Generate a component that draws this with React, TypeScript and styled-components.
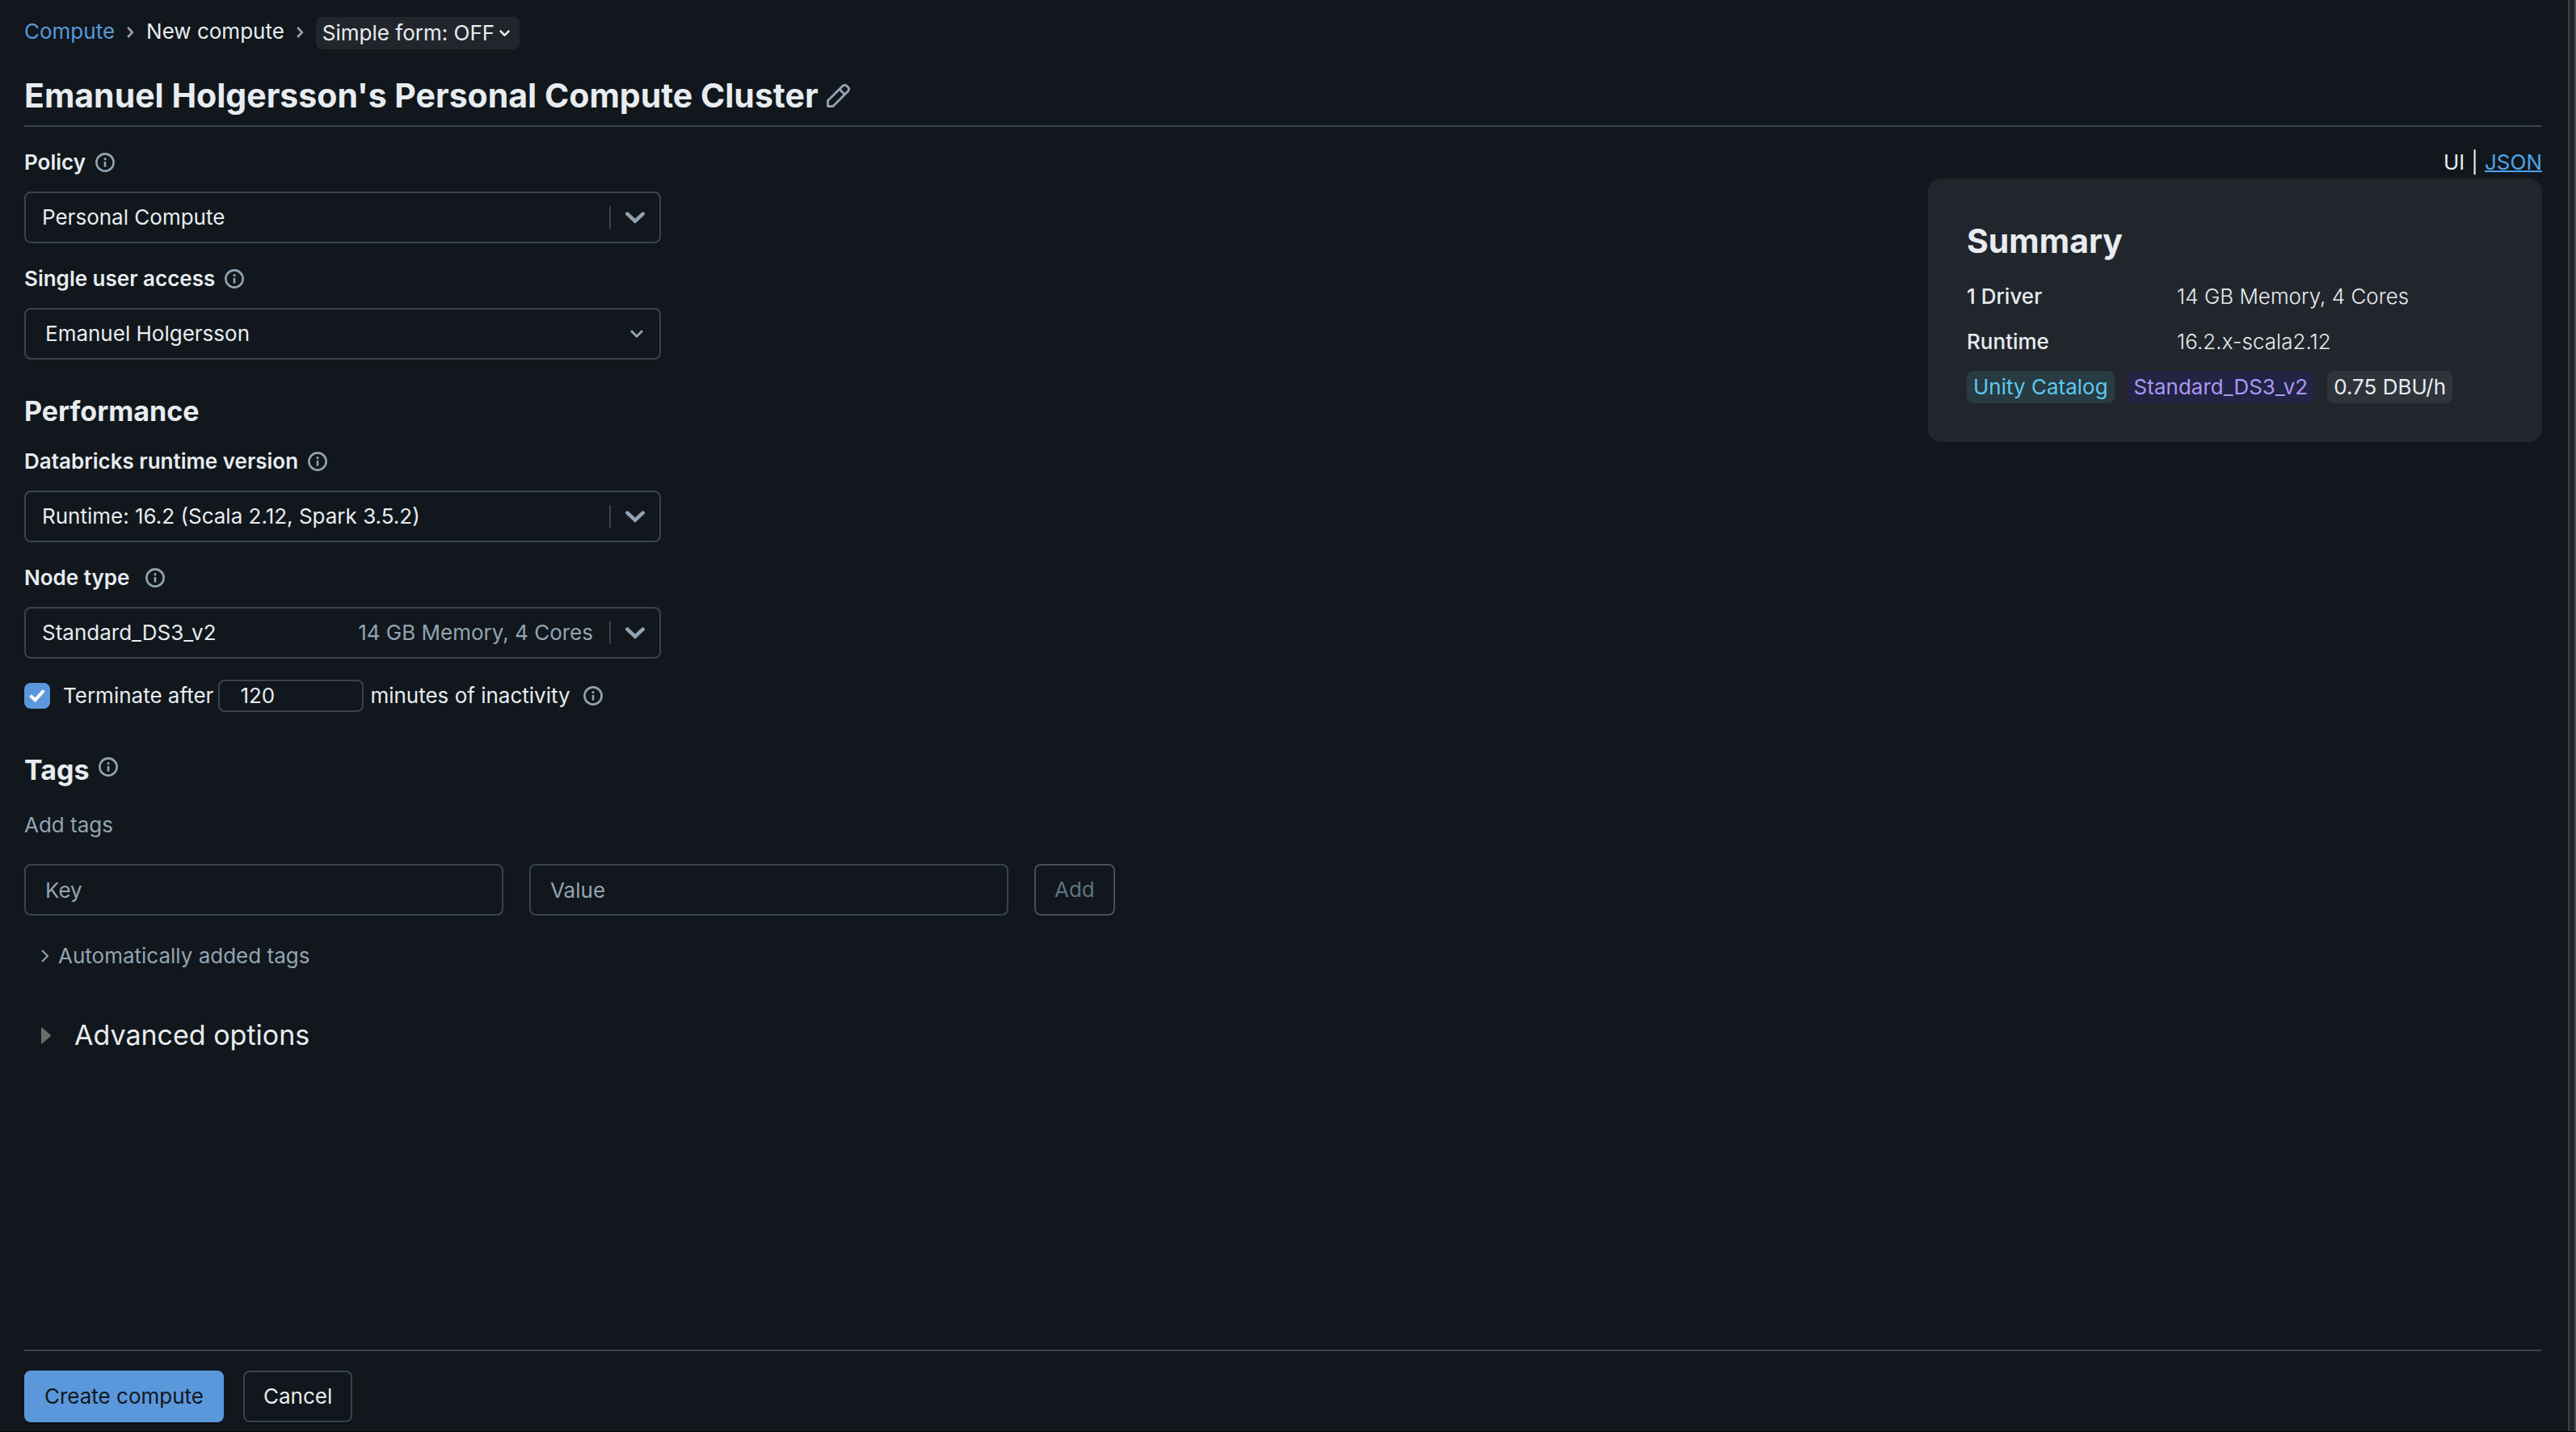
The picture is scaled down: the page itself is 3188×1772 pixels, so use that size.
import React, { useId, useState } from "react";
import styled, { createGlobalStyle, css } from "styled-components";

const color = {
  bg: "#11171c",
  panel: "#22262c",
  text: "#e8ecf0",
  muted: "#92a4b3",
  faint: "#5f7281",
  border: "#37444f",
  link: "#5a97db",
  linkBright: "#4ea3ea",
  primary: "#5a97db",
};

const GlobalStyle = createGlobalStyle`
  *, *::before, *::after { box-sizing: border-box; }
  body {
    margin: 0;
    background: ${color.bg};
    color: ${color.text};
    font-family: Inter, "Noto Sans", sans-serif;
    font-size: 26px;
    line-height: 40px;
  }
  button, input, select { font: inherit; color: inherit; }
`;

const Shell = styled.div`
  display: flex;
  min-height: 100vh;
  border-bottom: 1px solid #050507;
`;

const Page = styled.div`
  flex: 1;
  min-width: 0;
  display: flex;
  flex-direction: column;
  padding: 21px 32px 11px 30px;
`;

const Rail = styled.div`
  width: 10px;
  background: #22272b;
  border-left: 2px solid ${color.border};
  border-right: 2px solid #4a4e50;
`;

const Breadcrumbs = styled.nav`
  display: flex;
  align-items: flex-start;
  line-height: 36px;
`;

const Crumb = styled.a`
  color: ${color.link};
  text-decoration: none;
`;

const CrumbArrow = styled.svg`
  width: 9px;
  height: 36px;
  margin: 0 15px;
  fill: none;
  stroke: ${color.muted};
  stroke-width: 2.6;
`;

const ModeButton = styled.button`
  display: flex;
  align-items: center;
  gap: 6px;
  height: 40px;
  padding: 0 12px 0 8px;
  border: 0;
  border-radius: 8px;
  background: ${color.panel};
`;

const TitleRow = styled.header`
  display: flex;
  align-items: center;
  gap: 10px;
  margin-top: 28px;
  padding-bottom: 8px;
  border-bottom: 2px solid ${color.border};
`;

const Title = styled.h1`
  margin: 0;
  font-size: 41px;
  font-weight: 700;
  line-height: 58px;
`;

const IconButton = styled.button`
  display: inline-flex;
  align-items: center;
  height: 40px;
  padding: 0;
  border: 0;
  background: none;
  color: ${color.muted};
`;

const Main = styled.main`
  flex: 1;
  display: grid;
  grid-template-columns: minmax(0, 1fr) 760px;
  align-items: start;
  padding-top: 24px;
`;

const Form = styled.form`
  display: flex;
  flex-direction: column;
  align-items: flex-start;
`;

const Field = styled.div`
  width: 788px;
  max-width: 100%;
  & + & { margin-top: 24px; }
`;

const LabelRow = styled.div<{ $gap?: number }>`
  display: flex;
  align-items: flex-start;
  gap: ${(p) => p.$gap ?? 12}px;
  margin-bottom: 16px;
  font-weight: 600;
`;

const box = css`
  height: 64px;
  border: 2px solid ${color.border};
  border-radius: 8px;
  background: transparent;
`;

const SelectBox = styled.div<{ $inset: number; $end: number }>`
  ${box}
  display: flex;
  align-items: center;
  padding: 0 ${(p) => p.$end}px 0 ${(p) => p.$inset}px;
`;

const Select = styled.select`
  flex: 1;
  min-width: 0;
  height: 60px;
  padding: 0;
  border: 0;
  outline: 0;
  appearance: none;
  background: transparent;
`;

const Hint = styled.span`
  margin-right: 20px;
  color: ${color.muted};
`;

const Separator = styled.span`
  width: 2px;
  height: 28px;
  margin-right: 18px;
  background: ${color.border};
`;

const SectionTitle = styled.h2`
  display: flex;
  align-items: flex-start;
  gap: 12px;
  margin: 40px 0 18px;
  font-size: 34px;
  font-weight: 700;
  line-height: 48px;
`;

const TagsTitle = styled(SectionTitle)`
  margin: 48px 0 24px;
`;

const TerminateRow = styled.div`
  display: flex;
  align-items: center;
  margin-top: 26px;
`;

const Checkbox = styled.input`
  appearance: none;
  width: 32px;
  height: 32px;
  margin: 0 16px 0 0;
  border: 2px solid ${color.border};
  border-radius: 8px;
  display: grid;
  place-items: center;
  &:checked {
    border-color: ${color.primary};
    background: ${color.primary};
  }
  &:checked::after {
    content: "";
    width: 10px;
    height: 18px;
    margin-bottom: 5px;
    border: solid #fff;
    border-width: 0 4px 4px 0;
    transform: rotate(42deg);
  }
`;

const MinutesInput = styled.input`
  width: 180px;
  height: 40px;
  margin: 0 8px 0 6px;
  padding: 0 25px;
  border: 2px solid ${color.border};
  border-radius: 8px;
  background: transparent;
`;

const InlineInfo = styled.span`
  display: inline-flex;
  margin-left: 16px;
`;

const Note = styled.p`
  margin: 0 0 28px;
  color: ${color.muted};
`;

const TagRow = styled.div`
  display: flex;
  gap: 32px;
`;

const TextInput = styled.input`
  ${box}
  width: 593px;
  padding: 0 24px;
  &::placeholder { color: ${color.muted}; opacity: 1; }
`;

const Button = styled.button<{ $primary?: boolean }>`
  ${box}
  padding: 0 23px;
  box-shadow: 0 2px 0 rgba(0, 0, 0, 0.3);
  ${(p) =>
    p.$primary &&
    css`
      border-color: ${color.primary};
      background: ${color.primary};
      color: ${color.bg};
    `}
  &:disabled {
    border-color: #44505c;
    color: ${color.faint};
    box-shadow: none;
  }
`;

const Disclosure = styled.button<{ $large?: boolean }>`
  display: flex;
  align-items: center;
  gap: ${(p) => (p.$large ? 29 : 12)}px;
  margin-top: ${(p) => (p.$large ? 54 : 30)}px;
  padding: 0 0 0 21px;
  border: 0;
  background: none;
  color: ${(p) => (p.$large ? color.text : color.muted)};
  font-size: ${(p) => (p.$large ? 34 : 26)}px;
  font-weight: 400;
  line-height: ${(p) => (p.$large ? 48 : 40)}px;
`;

const Aside = styled.aside`
  display: flex;
  flex-direction: column;
`;

const ViewSwitch = styled.div`
  display: flex;
  justify-content: flex-end;
  gap: 8px;
`;

const JsonLink = styled.a`
  color: ${color.linkBright};
  text-decoration: underline;
  text-decoration-thickness: 2px;
`;

const Card = styled.section`
  padding: 48px;
  border-radius: 16px;
  background: ${color.panel};
`;

const CardTitle = styled.h2`
  margin: 0 0 20px;
  font-size: 41px;
  font-weight: 700;
  line-height: 58px;
`;

const Facts = styled.dl`
  display: grid;
  grid-template-columns: 260px 1fr;
  row-gap: 16px;
  margin: 0 0 16px;
  dt { font-weight: 500; }
  dd { margin: 0; font-weight: 300; }
`;

const Chips = styled.div`
  display: flex;
  gap: 16px;
`;

const Chip = styled.span<{ $bg: string; $fg: string }>`
  padding: 0 8px;
  border-radius: 8px;
  background: ${(p) => p.$bg};
  color: ${(p) => p.$fg};
`;

const Footer = styled.footer`
  display: flex;
  gap: 24px;
  padding-top: 24px;
  border-top: 2px solid ${color.border};
`;

const Info = ({ about }: { about: string }) => (
  <IconButton type="button" aria-label={`About ${about}`}>
    <svg width="24" height="24" viewBox="0 0 24 24" fill="none">
      <circle cx="12" cy="12" r="10.6" stroke="currentColor" strokeWidth="2.6" />
      <rect x="10.7" y="6.2" width="2.6" height="3" fill="currentColor" />
      <rect x="10.7" y="11" width="2.6" height="6.6" fill="currentColor" />
    </svg>
  </IconButton>
);

const BigChevron = () => (
  <svg width="24" height="15" viewBox="0 0 24 15" fill="none" stroke={color.muted} strokeWidth="4.6" strokeLinecap="round">
    <path d="M2.4 2.6 12 11.6 21.6 2.6" />
  </svg>
);

const SmallChevron = ({ tone = color.muted, size = 16 }: { tone?: string; size?: number }) => (
  <svg width={size} height={size * 0.625} viewBox="0 0 16 10" fill="none" stroke={tone} strokeWidth="3">
    <path d="M1 1.2 8 8.2 15 1.2" />
  </svg>
);

const Arrow = () => (
  <CrumbArrow viewBox="0 0 9 36" aria-hidden>
    <path d="M1.2 13 6.8 19 1.2 25" />
  </CrumbArrow>
);

type PickerProps = {
  label: string;
  value: string;
  hint?: string;
  plain?: boolean;
  labelGap?: number;
};

const Picker = ({ label, value, hint, plain, labelGap }: PickerProps) => {
  const id = useId();
  return (
    <Field>
      <LabelRow $gap={labelGap}>
        <label htmlFor={id}>{label}</label>
        <Info about={label} />
      </LabelRow>
      <SelectBox $inset={plain ? 24 : 20} $end={plain ? 20 : 18}>
        <Select id={id} defaultValue={value}>
          <option value={value}>{value}</option>
        </Select>
        {hint && <Hint>{hint}</Hint>}
        {plain ? (
          <SmallChevron />
        ) : (
          <>
            <Separator />
            <BigChevron />
          </>
        )}
      </SelectBox>
    </Field>
  );
};

export default function App() {
  const [terminate, setTerminate] = useState(true);
  const [minutes, setMinutes] = useState("120");

  return (
    <>
      <GlobalStyle />
      <Shell>
        <Page>
          <Breadcrumbs aria-label="Breadcrumb">
            <Crumb href="#compute">Compute</Crumb>
            <Arrow />
            <span>New compute</span>
            <Arrow />
            <ModeButton type="button">
              Simple form: OFF
              <SmallChevron tone={color.text} size={13} />
            </ModeButton>
          </Breadcrumbs>

          <TitleRow>
            <Title>Emanuel Holgersson's Personal Compute Cluster</Title>
            <IconButton type="button" aria-label="Rename cluster">
              <svg width="29" height="29" viewBox="0 0 29 29" fill="none" stroke="currentColor" strokeWidth="2.8" strokeLinejoin="round">
                <path d="M1.5 27.5V20.5L20 2.2Q22.5 .4 24.8 2.2L26.6 4Q28.6 6.4 26.6 8.8L8 27.5Z" />
                <path d="M16 6.5 22.5 13" />
              </svg>
            </IconButton>
          </TitleRow>

          <Main>
            <Form onSubmit={(e) => e.preventDefault()}>
              <Picker label="Policy" value="Personal Compute" />
              <Picker label="Single user access" value="Emanuel Holgersson" plain />

              <SectionTitle>Performance</SectionTitle>
              <Picker label="Databricks runtime version" value="Runtime: 16.2 (Scala 2.12, Spark 3.5.2)" />
              <Picker label="Node type" value="Standard_DS3_v2" hint="14 GB Memory, 4 Cores" labelGap={20} />

              <TerminateRow>
                <Checkbox
                  id="terminate"
                  type="checkbox"
                  checked={terminate}
                  onChange={(e) => setTerminate(e.target.checked)}
                />
                <label htmlFor="terminate">Terminate after</label>
                <MinutesInput
                  id="minutes"
                  value={minutes}
                  onChange={(e) => setMinutes(e.target.value)}
                />
                <label htmlFor="minutes">minutes of inactivity</label>
                <InlineInfo>
                  <Info about="inactivity" />
                </InlineInfo>
              </TerminateRow>

              <TagsTitle>
                Tags
                <Info about="tags" />
              </TagsTitle>
              <Note>Add tags</Note>
              <TagRow>
                <TextInput aria-label="Key" placeholder="Key" />
                <TextInput aria-label="Value" placeholder="Value" />
                <Button type="button" disabled>Add</Button>
              </TagRow>

              <Disclosure type="button" aria-expanded={false}>
                <svg width="9" height="16" viewBox="0 0 9 16" fill="none" stroke="currentColor" strokeWidth="2">
                  <path d="M1 1 8 8 1 15" />
                </svg>
                Automatically added tags
              </Disclosure>
              <Disclosure type="button" aria-expanded={false} $large>
                <svg width="12" height="21" viewBox="0 0 12 21" fill="#6b6b6b">
                  <path d="M0 1Q0 0 1 .6L11.4 9.6Q12.2 10.5 11.4 11.4L1 20.4Q0 21 0 20Z" />
                </svg>
                Advanced options
              </Disclosure>
            </Form>

            <Aside>
              <ViewSwitch>
                <span>UI</span>
                <span>|</span>
                <JsonLink href="#json">JSON</JsonLink>
              </ViewSwitch>
              <Card>
                <CardTitle>Summary</CardTitle>
                <Facts>
                  <dt>1 Driver</dt>
                  <dd>14 GB Memory, 4 Cores</dd>
                  <dt>Runtime</dt>
                  <dd>16.2.x-scala2.12</dd>
                </Facts>
                <Chips>
                  <Chip $bg="#283a42" $fg="#5ccaee">Unity Catalog</Chip>
                  <Chip $bg="#232343" $fg="#ab97f5">Standard_DS3_v2</Chip>
                  <Chip $bg="#2f343b" $fg={color.text}>0.75 DBU/h</Chip>
                </Chips>
              </Card>
            </Aside>
          </Main>

          <Footer>
            <Button type="button" $primary>Create compute</Button>
            <Button type="button">Cancel</Button>
          </Footer>
        </Page>
        <Rail />
      </Shell>
    </>
  );
}
